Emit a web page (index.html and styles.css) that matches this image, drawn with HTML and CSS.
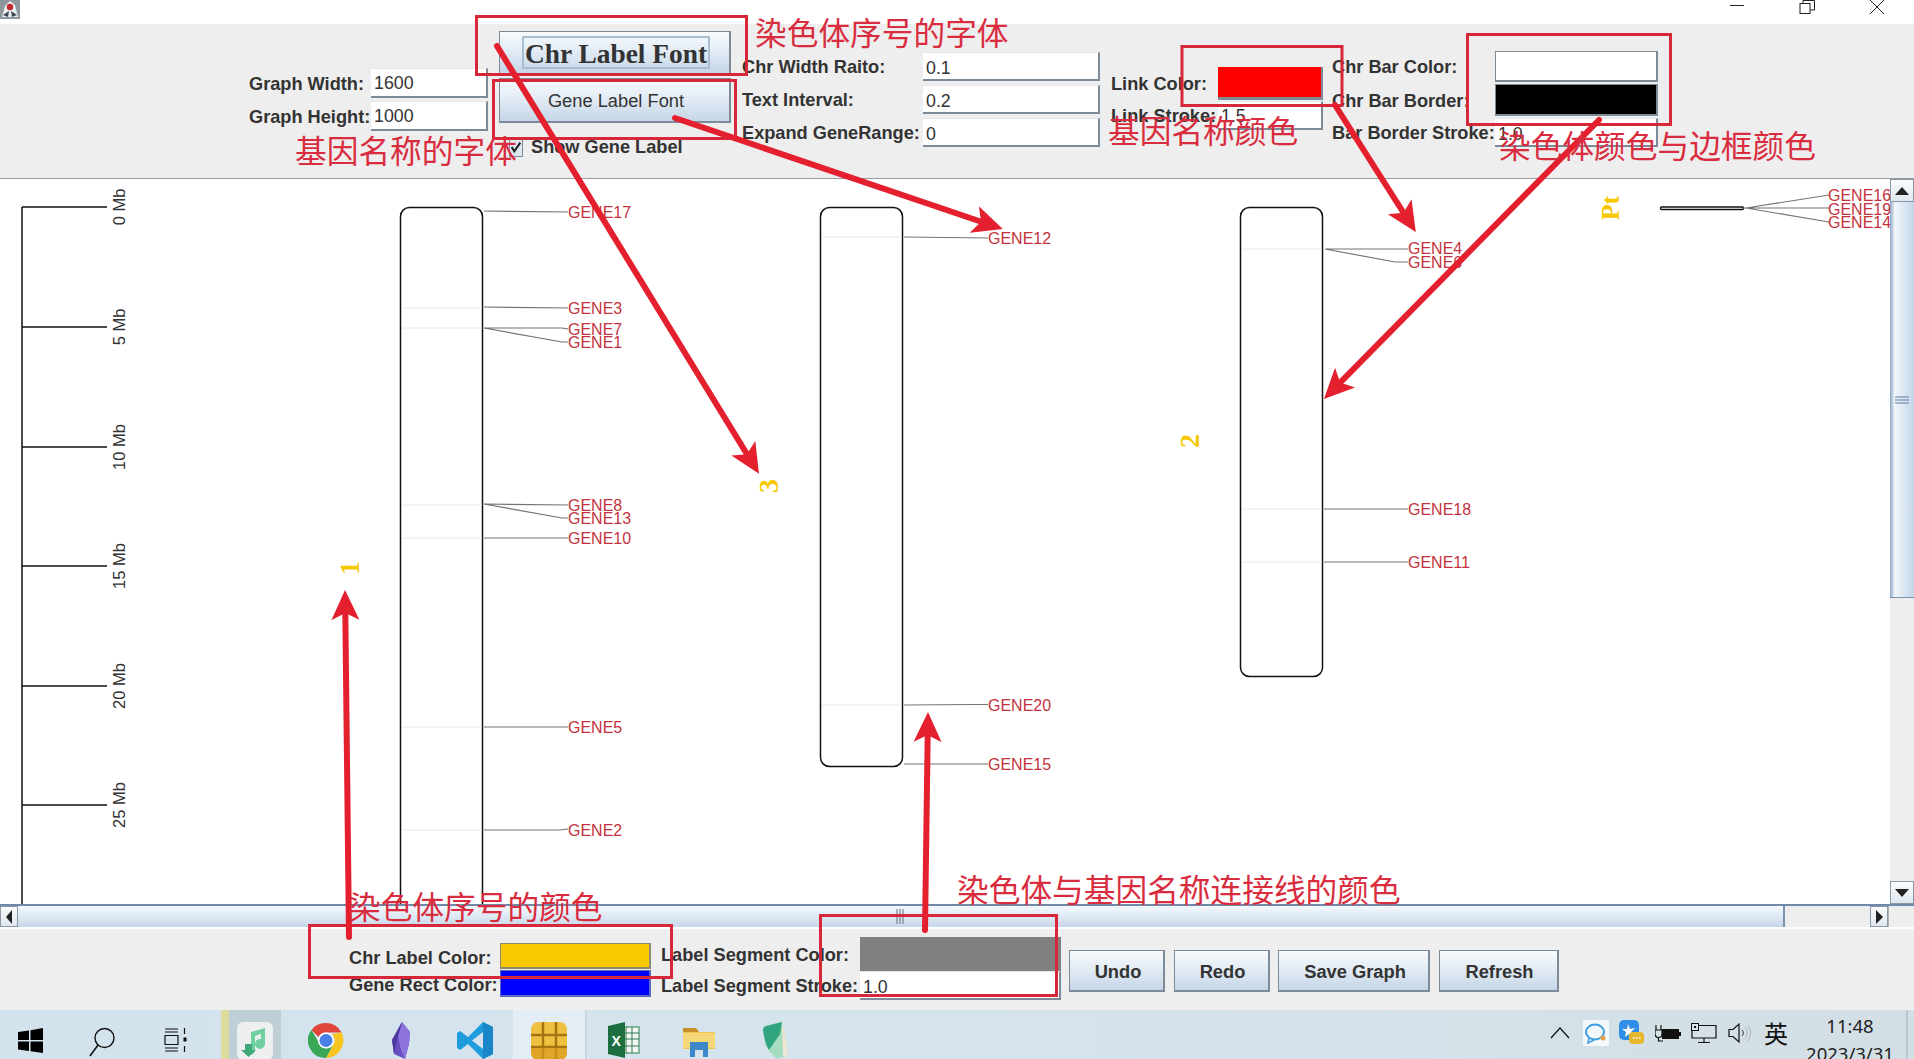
FILE: index.html
```html
<!DOCTYPE html>
<html lang="zh-CN">
<head>
<meta charset="utf-8">
<title>Chromosome Graph</title>
<link rel="stylesheet" href="styles.css">
</head>
<body>
<div class="app">
  <header class="titlebar">
    <svg class="app-icon" width="20" height="19" viewBox="0 0 20 19"><rect x="0" y="0" width="20" height="19" fill="#8d979c"/><path d="M2 17 L5 6 L10 1 L15 5 L18 17Z" fill="#e9edef"/><circle cx="10" cy="7" r="3.2" fill="#c22b2b"/><path d="M3 15 L9 11 L8 17Z M17 15 L11 11 L12 17Z" fill="#3e4a52"/></svg>
    <div class="window-controls">
      <svg class="win-btn" width="70" height="24" viewBox="0 0 70 24"><path d="M28 5.5H42" stroke="#222" fill="none"/></svg>
      <svg class="win-btn" width="70" height="24" viewBox="0 0 70 24"><rect x="28" y="3.500" width="10" height="10" fill="#fff" stroke="#222"/><path d="M31 3.500V0.500H42.500V10H38" stroke="#222" fill="none"/></svg>
      <svg class="win-btn" width="70" height="24" viewBox="0 0 70 24"><path d="M28 0L42 14M42 0L28 14" stroke="#222" fill="none"/></svg>
    </div>
  </header>

  <section class="top-panel">
    <div class="group graph-size">
      <label class="lbl">Graph Width:</label><div class="input">1600</div>
      <label class="lbl">Graph Height:</label><div class="input">1000</div>
    </div>
    <div class="group font-group">
      <button class="btn btn-chr"><span class="focus-ring">Chr Label Font</span></button>
      <button class="btn btn-gene">Gene Label Font</button>
      <div class="check-row"><span class="checkbox"><svg width="14" height="14" viewBox="0 0 14 14"><path d="M2 7L5 12L12 2" stroke="#222" stroke-width="2.500" fill="none"/></svg></span><span class="lbl">Show Gene Label</span></div>
    </div>
    <div class="group ratio-group">
      <label class="lbl">Chr Width Raito:</label><div class="input">0.1</div>
      <label class="lbl">Text Interval:</label><div class="input">0.2</div>
      <label class="lbl">Expand GeneRange:</label><div class="input">0</div>
    </div>
    <div class="group link-group">
      <label class="lbl">Link Color:</label><div class="swatch swatch-red"></div>
      <label class="lbl">Link Stroke:</label><div class="input">1.5</div>
    </div>
    <div class="group bar-group">
      <label class="lbl">Chr Bar Color:</label><div class="swatch swatch-white"></div>
      <label class="lbl">Chr Bar Border:</label><div class="swatch swatch-black"></div>
      <label class="lbl">Bar Border Stroke:</label><div class="input">1.0</div>
    </div>
  </section>

  <main class="viewport">
    <div class="canvas-row">
      <div class="canvas">
        <svg class="graph" width="1890" height="725" viewBox="0 179 1890 725">
          <g class="axis">
            <path d="M22 207V905M22 207H107M22 327H107M22 447H107M22 566H107M22 686H107M22 805H107"/>
            <text transform="translate(125 207) rotate(-90)">0 Mb</text>
            <text transform="translate(125 327) rotate(-90)">5 Mb</text>
            <text transform="translate(125 447) rotate(-90)">10 Mb</text>
            <text transform="translate(125 566) rotate(-90)">15 Mb</text>
            <text transform="translate(125 686) rotate(-90)">20 Mb</text>
            <text transform="translate(125 805) rotate(-90)">25 Mb</text>
          </g>

          <g class="chr">
            <rect x="400.500" y="207.500" width="82" height="800" rx="9"/>
            <rect x="820.500" y="207.500" width="82" height="559" rx="9"/>
            <rect x="1240.500" y="207.500" width="82" height="469" rx="9"/>
            <rect x="1660.500" y="207" width="83" height="2.500" rx="1.200"/>
          </g>
          <g class="bands">
            <path d="M402 308H482M402 328H482M402 505H482M402 538H482M402 727H482M402 830H482"/>
            <path d="M822 237H902M822 705H902"/>
            <path d="M1242 249H1322M1242 509H1322M1242 562H1322"/>
          </g>
          <g class="links">
            <path d="M484 211L568 212M484 307L568 308M484 328H562L568 329M484 328L562 342H568M484 504L568 505M484 504L562 518H568M484 538H568M484 727H568M484 830H560L568 829"/>
            <path d="M904 237L988 238M904 705L975 704.500H988M904 764H988"/>
            <path d="M1325 249H1408M1325 249L1395 262H1408M1324 509H1408M1324 562H1408"/>
            <path d="M1743 208H1746L1829 195M1746 208H1829M1746 208L1829 222"/>
          </g>
          <g class="genes">
            <text x="568" y="218">GENE17</text>
            <text x="568" y="314">GENE3</text>
            <text x="568" y="335">GENE7</text>
            <text x="568" y="348">GENE1</text>
            <text x="568" y="511">GENE8</text>
            <text x="568" y="524">GENE13</text>
            <text x="568" y="544">GENE10</text>
            <text x="568" y="733">GENE5</text>
            <text x="568" y="836">GENE2</text>
            <text x="988" y="244">GENE12</text>
            <text x="988" y="711">GENE20</text>
            <text x="988" y="770">GENE15</text>
            <text x="1408" y="254">GENE4</text>
            <text x="1408" y="268">GENE6</text>
            <text x="1408" y="515">GENE18</text>
            <text x="1408" y="568">GENE11</text>
            <text x="1828" y="201">GENE16</text>
            <text x="1828" y="215">GENE19</text>
            <text x="1828" y="228">GENE14</text>
          </g>
          <g class="chr-names">
            <text transform="translate(359 568) rotate(-90)">1</text>
            <text transform="translate(778 486) rotate(-90)">3</text>
            <text transform="translate(1199 441) rotate(-90)">2</text>
            <text class="pt-name" transform="translate(1619 208) rotate(-90)">Pt</text>
          </g>
        </svg>
      </div>
      <div class="vscroll">
        <div class="sb-btn sb-btn-v"><svg width="14" height="8" viewBox="0 0 14 8"><path d="M7 0L14 8H0Z" fill="#222"/></svg></div>
        <div class="vthumb"><svg width="14" height="8" viewBox="0 0 14 8"><path d="M0 1H14M0 4H14M0 7H14" stroke="#5b7ba0"/></svg></div>
        <div class="vtrack"></div>
        <div class="sb-btn sb-btn-v"><svg width="14" height="8" viewBox="0 0 14 8"><path d="M7 8L14 0H0Z" fill="#222"/></svg></div>
      </div>
    </div>
    <div class="hscroll">
      <div class="sb-btn sb-btn-h"><svg width="6" height="14" viewBox="0 0 6 14"><path d="M0 7L6 0V14Z" fill="#222"/></svg></div>
      <div class="hthumb"><svg width="9" height="15" viewBox="0 0 9 15"><path d="M1 0V15M4 0V15M7 0V15" stroke="#66727e"/></svg></div>
      <div class="htrack"></div>
      <div class="sb-btn sb-btn-h"><svg width="7" height="14" viewBox="0 0 7 14"><path d="M7 7L0 0V14Z" fill="#222"/></svg></div>
      <div class="corner"></div>
    </div>
  </main>

  <section class="bottom-panel">
    <div class="group color-group">
      <label class="lbl">Chr Label Color:</label><div class="swatch swatch-yellow"></div>
      <label class="lbl">Gene Rect Color:</label><div class="swatch swatch-blue"></div>
    </div>
    <div class="group segment-group">
      <label class="lbl">Label Segment Color:</label><div class="swatch swatch-gray"></div>
      <label class="lbl">Label Segment Stroke:</label><div class="input">1.0</div>
    </div>
    <div class="actions">
      <button class="btn btn-action btn-small">Undo</button>
      <button class="btn btn-action btn-small">Redo</button>
      <button class="btn btn-action btn-save">Save Graph</button>
      <button class="btn btn-action btn-refresh">Refresh</button>
    </div>
  </section>

  <footer class="taskbar">
    <div class="slot slot-start">
      <svg width="25" height="25" viewBox="0 0 25 25"><path d="M0 4L11 2.500V12H0ZM12.500 2.300L25 0V12H12.500ZM0 13.500H11V23L0 21.500ZM12.500 13.500H25V25L12.500 23.200Z" fill="#000"/></svg>
    </div>
    <div class="slot">
      <svg width="28" height="30" viewBox="0 0 28 30"><circle cx="16.500" cy="11" r="9.500" fill="none" stroke="#111" stroke-width="1.400"/><path d="M10 18L2 29" stroke="#111" stroke-width="1.600"/></svg>
    </div>
    <div class="slot">
      <svg width="26" height="26" viewBox="0 0 26 26"><path d="M1 2H14M1 5H14M1 21H14M1 24H14M1 8.500H14V17.500H1ZM20.500 1V7M20.500 19V25" fill="none" stroke="#111" stroke-width="1.200"/><rect x="19.500" y="10.500" width="3" height="4" fill="#111"/></svg>
    </div>
    <div class="slot"><div class="active-app">
      <svg width="36" height="38" viewBox="0 0 36 38"><rect width="36" height="38" rx="6" fill="#eef0f0"/><path d="M14 10L28 6V22A5 5 0 1 1 24 17V12L18 14V28A5 5 0 1 1 14 23Z" fill="#6fcf9f"/><path d="M8 22H15V28H19L11.500 35L4 28H8Z" fill="#3fa878"/></svg>
    </div></div>
    <div class="slot">
      <svg width="36" height="37" viewBox="0 0 36 37"><path d="M18 1A17.500 17.500 0 0 1 33.500 10.500H18A8 8 0 0 0 10.500 15L3.500 8A17.500 17.500 0 0 1 18 1Z" fill="#e0443a"/><path d="M33.500 10.500A17.500 17.500 0 0 1 18 36L25 23A8 8 0 0 0 24 12Z" fill="#f8c61e"/><path d="M3.500 8L11 21A8 8 0 0 0 25 23L18 36A17.500 17.500 0 0 1 3.500 8Z" fill="#3aa757"/><circle cx="18" cy="18.500" r="8" fill="#fff"/><circle cx="18" cy="18.500" r="6.500" fill="#4a7fe8"/></svg>
    </div>
    <div class="slot">
      <svg width="24" height="38" viewBox="0 0 24 38"><path d="M13 0L21 10L20 22L16 37L5 32L3 18Z" fill="#6a4fc0"/><path d="M13 0L9 14L12 28L16 37L20 22L21 10Z" fill="#8d74dc"/><path d="M13 0L3 18L5 32L9 14Z" fill="#4e38a0"/></svg>
    </div>
    <div class="slot">
      <svg width="36" height="37" viewBox="0 0 36 37"><path d="M26 0L36 5V32L26 37L11 22L3 28L0 26V11L3 9L11 15ZM26 10L15 18.500L26 27Z" fill="#1f9cdc"/><path d="M26 0L36 5V32L26 37Z" fill="#1a86c8"/></svg>
    </div>
    <div class="slot slot-light">
      <svg width="36" height="38" viewBox="0 0 36 38"><rect width="36" height="38" rx="7" fill="#f0c040"/><path d="M12 0V38M25 0V38M0 13H36M0 25H36" stroke="#a87412" stroke-width="2.500"/><path d="M0 26H36V31A7 7 0 0 1 29 38H7A7 7 0 0 1 0 31Z" fill="#d89a20" opacity=".7"/></svg>
    </div>
    <div class="slot">
      <svg width="32" height="36" viewBox="0 0 32 36"><rect x="13" y="5" width="18" height="26" fill="#f4f6f4" stroke="#2d7d4e"/><path d="M18 5V31M24 5V31M13 11H31M13 17H31M13 24H31" stroke="#2d7d4e"/><path d="M0 4L17 0V36L0 32Z" fill="#1d6f42"/><text class="excel-x" x="3.500" y="24">X</text></svg>
    </div>
    <div class="slot">
      <svg width="34" height="30" viewBox="0 0 34 30"><path d="M1 1H14L17 5H33V22H1Z" fill="#f2c24e"/><path d="M1 1H14L17 5H1Z" fill="#c78f28"/><rect x="1" y="6" width="32" height="15" fill="#f6d777"/><path d="M8 15H26V30H21V23H13V30H8Z" fill="#3d88c8"/></svg>
    </div>
    <div class="slot">
      <svg width="30" height="38" viewBox="0 0 30 38"><path d="M4 8Q4 5 7 4L23 0L29 26Q29 30 27 34L18 37Q10 30 6 22Z" fill="#a6dcc0"/><path d="M4 8Q4 5 7 4L23 0L21 12L10 28Q6 22 4 8Z" fill="#2fa47e"/><path d="M23 0L29 26Q29 30 27 36L24 34Z" fill="#ece7d3"/></svg>
    </div>
    <div class="tray">
      <div class="tray-slot"><svg width="20" height="12" viewBox="0 0 20 12"><path d="M1 11L10 1L19 11" fill="none" stroke="#111" stroke-width="1.200"/></svg></div>
      <div class="tray-slot"><svg width="26" height="26" viewBox="0 0 26 26"><rect width="26" height="26" fill="#f4f8fa"/><ellipse cx="12" cy="12" rx="9" ry="7.500" fill="none" stroke="#3b9fe0" stroke-width="2"/><path d="M6 18L5 23L11 20" fill="none" stroke="#3b9fe0" stroke-width="1.500"/><circle cx="20" cy="18" r="2.500" fill="#e2a04a"/></svg></div>
      <div class="tray-slot"><svg width="26" height="26" viewBox="0 0 26 26"><rect width="20" height="20" rx="5" fill="#2e8ee8"/><path d="M9 4L11 9L16 8L12 12L15 16L10 14L6 17L7 12L3 9L8 9Z" fill="#fff"/><rect x="10" y="12" width="15" height="12" rx="4" fill="#e6b72e"/><path d="M14 18H15.500M17 18H18.500M20 18H21.500" stroke="#fff" stroke-width="1.500"/></svg></div>
      <div class="tray-slot"><svg width="26" height="18" viewBox="0 0 26 18"><path d="M1 1V6M6 1V6M0 6H7V10A3.500 3.500 0 0 1 0 10ZM3.500 13V17H8" fill="none" stroke="#111" stroke-width="1.200"/><rect x="7" y="5" width="17" height="10" fill="#111"/><rect x="24" y="8" width="2" height="4" fill="#111"/></svg></div>
      <div class="tray-slot"><svg width="26" height="20" viewBox="0 0 26 20"><path d="M7 2.500H25V15H1V7M13 15V19M7 19.500H19" fill="none" stroke="#111" stroke-width="1.200"/><rect x="0.500" y="0.500" width="7" height="7" fill="#d4e2ea" stroke="#111"/><rect x="3" y="3" width="2" height="2" fill="#111"/></svg></div>
      <div class="tray-slot"><svg width="24" height="22" viewBox="0 0 24 22"><path d="M1 7.500H5L11 2V20L5 14.500H1Z" fill="none" stroke="#111" stroke-width="1.200"/><path d="M14 8A4 4 0 0 1 14 14" fill="none" stroke="#333"/><path d="M17 5A9 9 0 0 1 17 17M20 3A13 13 0 0 1 20 19" fill="none" stroke="#aab2b8"/></svg></div>
      <div class="tray-slot ime">英</div>
      <div class="clock"><span>11:48</span><span>2023/3/31</span></div>
      <div class="show-desktop"></div>
    </div>
  </footer>

  <div class="overlay">
    <svg class="notes" width="1914" height="1059" viewBox="0 0 1914 1059">
      <defs>
        <marker id="head" markerUnits="userSpaceOnUse" markerWidth="30" markerHeight="30" refX="8" refY="15" orient="auto" viewBox="0 0 30 30">
          <path d="M0 1L30 15L0 29L7 15Z" fill="#e4202f"/>
        </marker>
      </defs>
      <g class="boxes">
        <rect x="476.500" y="16.500" width="270" height="58"/>
        <rect x="493.500" y="80.500" width="242" height="58"/>
        <rect x="1182" y="46.500" width="160" height="59"/>
        <rect x="1467.500" y="34.500" width="203" height="90"/>
        <rect x="309.500" y="925.500" width="362" height="52"/>
        <rect x="820.500" y="915.500" width="236" height="80"/>
      </g>
      <g class="arrows">
        <line x1="497" y1="46" x2="747.500" y2="455" marker-end="url(#head)"/>
        <line x1="675" y1="118" x2="982" y2="222" marker-end="url(#head)"/>
        <line x1="1335" y1="105" x2="1404" y2="213.500" marker-end="url(#head)"/>
        <line x1="1599" y1="120" x2="1339.400" y2="383.300" marker-end="url(#head)"/>
        <line x1="349" y1="937" x2="345.300" y2="612" marker-end="url(#head)"/>
        <line x1="925" y1="930" x2="927.700" y2="734" marker-end="url(#head)"/>
      </g>
      <g class="captions">
        <text x="755" y="45">染色体序号的字体</text>
        <text x="295" y="163">基因名称的字体</text>
        <text x="1108" y="143">基因名称颜色</text>
        <text x="1499" y="158">染色体颜色与边框颜色</text>
        <text x="349" y="919">染色体序号的颜色</text>
        <text x="957" y="902">染色体与基因名称连接线的颜色</text>
      </g>
    </svg>
  </div>
</div>
</body>
</html>
```

FILE: styles.css
```css
* { box-sizing: border-box; }
html, body { margin: 0; padding: 0; }
body { background: #fff; overflow: hidden; }

.app {
  position: relative;
  width: 1914px;
  height: 1059px;
  display: flex;
  flex-direction: column;
  overflow: hidden;
  font-family: "Liberation Sans", Arial, sans-serif;
  color: #333;
}

/* title bar */
.titlebar {
  height: 24px;
  flex: none;
  display: flex;
  justify-content: space-between;
  align-items: flex-start;
  background: #fff;
}
.app-icon { display: block; }
.window-controls { display: flex; margin-right: 2px; }
.win-btn { display: block; }

/* shared form pieces */
.group { display: grid; }
.lbl {
  font-size: 18.200px;
  font-weight: 700;
  color: #333;
  white-space: nowrap;
  align-self: center;
  padding-top: 2px;
}
.input {
  background: #fff;
  border-top: 1px solid #e4e6e8;
  border-right: 2px solid #7d8b98;
  border-bottom: 2px solid #7d8b98;
  padding: 1px 0 0 3px;
  font-size: 17.800px;
  line-height: 26px;
  color: #333;
}
.swatch { border-right: 2px solid #7d8b98; border-bottom: 2px solid #7d8b98; }
.swatch-red { background: #ff0000; border-bottom-width: 3px; }
.swatch-white { background: #fff; border: 2px solid #7d8b98; border-top-width: 1px; border-left-width: 1px; }
.swatch-black { background: #000; border: 2px solid #7d8b98; border-left-width: 1px; border-top-width: 1px; }
.swatch-yellow { background: #f8c900; border: 1px solid #8e8a6a; border-width: 1px 2px 2px 1px; }
.swatch-blue { background: #0000ff; border: 1px solid #5b6bc0; border-width: 1px 2px 2px 1px; }
.swatch-gray { background: #808080; border: 0; }

.btn {
  display: flex;
  align-items: center;
  justify-content: center;
  padding: 0;
  border: 1px solid #7d8b98;
  border-right-width: 2px;
  border-bottom-width: 2px;
  background: linear-gradient(#f7fafd 0%, #e3ecf5 45%, #c5d6e7 100%);
  font-family: "Liberation Sans", Arial, sans-serif;
  color: #333;
}
.btn-chr {
  height: 44px;
  padding-left: 3px;
  font-family: "Liberation Serif", "Times New Roman", serif;
  font-weight: 700;
  font-size: 27.400px;
}
.focus-ring {
  display: block;
  padding: 0 1px;
  height: 33px;
  line-height: 33px;
  border: 2px solid #a9bed3;
}
.btn-gene { height: 45px; font-size: 18.300px; padding-left: 3px; padding-top: 2px; }

/* top panel */
.top-panel {
  height: 155px;
  flex: none;
  display: flex;
  align-items: flex-start;
  padding-left: 249px;
  background: #eeeeee;
  border-bottom: 1px solid #9a9a9a;
}
.graph-size {
  margin-top: 44px;
  grid-template-columns: 122px 117px;
  grid-template-rows: 30px 30px;
  row-gap: 3px;
}
.font-group {
  margin: 7px 0 0 11px;
  width: 232px;
  row-gap: 3px;
}
.check-row {
  display: flex;
  align-items: center;
  gap: 8px;
  margin-top: 11px;
  padding-left: 10px;
  height: 20px;
}
.check-row .lbl { padding-top: 0; }
.checkbox {
  width: 14px;
  height: 19px;
  display: flex;
  align-items: center;
  justify-content: center;
  background: #dfe6ee;
  border: 1px solid #7d8b98;
}
.ratio-group {
  margin: 28px 0 0 11px;
  grid-template-columns: 181px 177px;
  grid-template-rows: 29px 29px 29px;
  row-gap: 4px;
}
.ratio-group .lbl, .bar-group .lbl { padding-top: 2px; }
.ratio-group .input, .bar-group .input { padding-top: 2px; }
.link-group {
  margin: 43px 0 0 11px;
  grid-template-columns: 107px 105px;
  grid-template-rows: 33px 29px;
  row-gap: 1px;
}
.bar-group {
  margin: 27px 0 0 9px;
  grid-template-columns: 163px 163px;
  grid-template-rows: 31px 32px 29px;
  row-gap: 2px;
}

/* drawing area */
.viewport {
  height: 748px;
  flex: none;
  display: flex;
  flex-direction: column;
}
.canvas-row { height: 725px; display: flex; }
.canvas { width: 1890px; height: 725px; overflow: hidden; background: #fff; }
.graph { display: block; }
.axis path { fill: none; stroke: #111; stroke-width: 1.500px; }
.axis text { font-size: 16.500px; fill: #333; text-anchor: middle; }
.bands path { fill: none; stroke: #e8e8ec; stroke-width: 1px; }
.chr rect { fill: #fff; stroke: #111; stroke-width: 1.500px; }
.links path { fill: none; stroke: #737373; stroke-width: 1.200px; }
.genes text { font-size: 16px; fill: #c4323e; }
.chr-names text {
  font-family: "Liberation Serif", "Times New Roman", serif;
  font-weight: 700;
  font-size: 28px;
  fill: #f6c800;
  text-anchor: middle;
}
.chr-names .pt-name { font-size: 26px; }

/* scrollbars */
.vscroll {
  width: 24px;
  display: flex;
  flex-direction: column;
  background: #eeeeee;
}
.sb-btn {
  flex: none;
  display: flex;
  align-items: center;
  justify-content: center;
  background: linear-gradient(#fbfcfd, #dfe7ef);
  border: 1px solid #8a98a6;
}
.sb-btn-v { height: 23px; }
.vthumb {
  height: 396px;
  flex: none;
  display: flex;
  align-items: center;
  justify-content: center;
  background: linear-gradient(90deg, #8aa5c4 0, #f3f7fb 20%, #dbe7f3 60%, #c2d4e7 100%);
  border-bottom: 1px solid #7b93ae;
}
.vtrack { flex: 1; }
.hscroll {
  height: 23px;
  flex: none;
  display: flex;
  background: #eeeeee;
  border-top: 2px solid #6f89aa;
}
.sb-btn-h { width: 18px; }
.hthumb {
  width: 1767px;
  flex: none;
  display: flex;
  align-items: center;
  justify-content: center;
  background: linear-gradient(#f4f8fc 0, #e2ecf6 40%, #c6d7e8 100%);
  border-right: 2px solid #7b93ae;
}
.htrack { flex: 1; }
.corner { width: 26px; border-left: 1px solid #a9b2bb; }

/* bottom panel */
.bottom-panel {
  height: 83px;
  flex: none;
  display: flex;
  align-items: flex-start;
  padding-left: 349px;
  background: #eeeeee;
  border-top: 2px solid #fff;
}
.color-group {
  margin-top: 14px;
  grid-template-columns: 151px 151px;
  grid-template-rows: 26px 27px;
  row-gap: 1px;
}
.color-group .lbl { padding-top: 4px; }
.segment-group {
  margin: 8px 0 0 10px;
  grid-template-columns: 199px 201px;
  grid-template-rows: 34px 29px;
}
.segment-group .input { padding-top: 2px; }
.actions {
  margin: 21px 0 0 8px;
  display: flex;
  gap: 8.500px;
}
.btn-action { height: 42px; font-size: 18.300px; font-weight: 700; padding: 3px 0 0 3px; }
.btn-small { width: 96px; }
.btn-save { width: 152px; }
.btn-refresh { width: 120px; }

/* task bar */
.taskbar {
  height: 49px;
  flex: none;
  display: flex;
  overflow: hidden;
  background: linear-gradient(90deg, #d3e3ee 0%, #d5e3ec 50%, #d3dfe4 100%);
}
.slot {
  width: 74.600px;
  height: 49px;
  flex: none;
  display: flex;
  justify-content: center;
  padding-top: 12px;
}
.slot-start { width: 60px; margin-right: 5px; padding-top: 18px; }
.slot:nth-child(2), .slot:nth-child(3) { padding-top: 17px; }
.slot:nth-child(10) { padding-top: 17px; }
.active-app {
  width: 60px;
  height: 49px;
  margin-top: -12px;
  padding-top: 12px;
  display: flex;
  justify-content: center;
  background: #bfcfd6;
  border-left: 8px solid #dcdc9c;
}
.slot-light { background: #e3edf3; border-right: 2px solid #c9d6de; }
.excel-x { font-size: 14px; font-weight: 700; fill: #fff; }
.tray {
  margin-left: auto;
  display: flex;
  align-items: flex-start;
  color: #111;
}
.tray-slot {
  width: 36px;
  height: 49px;
  display: flex;
  align-items: center;
  justify-content: center;
  padding-bottom: 4px;
}
.ime { font-family: "Noto Sans CJK SC", sans-serif; font-size: 24px; }
.clock {
  width: 112px;
  display: flex;
  flex-direction: column;
  align-items: center;
  font-family: "Noto Sans", sans-serif;
  font-size: 18.500px;
  line-height: 28px;
  color: #222;
  padding-top: 2px;
}
.clock span { display: block; white-space: nowrap; }
.show-desktop { width: 8px; height: 49px; border-left: 2px solid #bcc8cf; }

/* annotation layer */
.overlay { position: absolute; left: 0; top: 0; pointer-events: none; }
.notes { display: block; }
.boxes rect { fill: none; stroke: #d62839; stroke-width: 3px; }
.arrows line { stroke: #e4202f; stroke-width: 6px; stroke-linecap: round; }
.captions text {
  font-family: "Noto Sans CJK SC", sans-serif;
  font-size: 31.700px;
  fill: #d92c3e;
}
```
